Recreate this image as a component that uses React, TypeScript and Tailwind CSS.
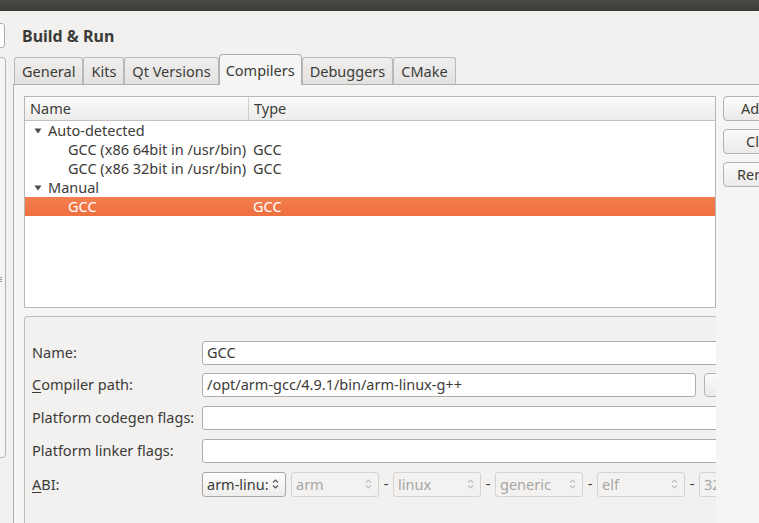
import React from 'react';

const font = { fontFamily: '"Noto Sans", "Open Sans", sans-serif' };

const Triangle: React.FC = () => (
  <svg width="8" height="6" viewBox="0 0 8 6" className="shrink-0">
    <path d="M0.5 0.5 L7.5 0.5 L4 5.5 Z" fill="#4a4a4a" />
  </svg>
);

const Spin: React.FC<{ color: string }> = ({ color }) => (
  <svg width="7" height="12" viewBox="0 0 7 12" className="shrink-0">
    <path d="M1 4.5 L3.5 2 L6 4.5" fill="none" stroke={color} strokeWidth="1.1" />
    <path d="M1 7.5 L3.5 10 L6 7.5" fill="none" stroke={color} strokeWidth="1.1" />
  </svg>
);

const tabs = ['General', 'Kits', 'Qt Versions', 'Compilers', 'Debuggers', 'CMake'];

const Combo: React.FC<{ label: string; disabled?: boolean; width: string }> = ({ label, disabled, width }) => (
  <div
    className={`flex h-[25px] shrink-0 items-center justify-between rounded-[3px] border pb-[1px] pl-[4px] pr-[6px] ${width} ${
      disabled ? 'border-[#d4d3d1] bg-[#f3f2f1] text-[#a7a6a4]' : 'border-[#a8a7a5] bg-gradient-to-b from-[#fdfdfd] to-[#eeedec] text-[#3c3b37]'
    }`}
  >
    <span>{label}</span>
    <Spin color={disabled ? '#c0bfbd' : '#55544f'} />
  </div>
);

const Dash: React.FC = () => <span className="w-[14px] shrink-0 pb-[2px] text-center text-[#3c3b37]">-</span>;

const Field: React.FC<{ children?: React.ReactNode }> = ({ children }) => (
  <div className="flex h-[24px] w-[560px] shrink-0 items-center rounded-[3px] border border-[#aeadab] bg-white px-[4px] pb-[1px] text-[#3c3b37]">
    {children}
  </div>
);

const App: React.FC = () => {
  return (
    <div style={font} className="relative h-[523px] w-[759px] overflow-hidden bg-[#f2f1f0] text-[14.5px] leading-[19px] text-[#3c3b37]">
      {/* Window title bar */}
      <div className="h-[11px] bg-gradient-to-b from-[#4d4b45] to-[#3c3b37]" />

      <div className="flex h-[512px]">
        {/* Cut-off sidebar */}
        <div className="relative w-[13px] shrink-0">
          <div className="absolute left-[-12px] top-[12px] h-[25px] w-[17px] rounded-[3px] border border-[#aeadab] bg-white" />
          <div className="absolute left-[-12px] top-[46px] h-[401px] w-[18px] rounded-[4px] border border-[#b5b4b2] bg-[#f5f5f5]" />
          <div className="absolute left-[-2px] top-[266px] flex flex-col gap-[1px]">
            <div className="h-[1px] w-[4px] bg-[#9a9996]" />
            <div className="h-[1px] w-[4px] bg-[#9a9996]" />
            <div className="h-[1px] w-[4px] bg-[#9a9996]" />
          </div>
        </div>

        {/* Main */}
        <div className="flex min-w-0 flex-1 flex-col">
          <div className="flex h-[43px] items-center pl-[9px] pt-[7px] text-[16px] font-bold text-[#3c3b37]">Build &amp; Run</div>

          {/* Tab bar */}
          <div className="flex h-[30px] items-end pl-[1px]">
            {tabs.map((t) =>
              t === 'Compilers' ? (
                <div
                  key={t}
                  className="relative z-10 mb-[-1px] flex h-[31px] items-center rounded-t-[4px] border border-b-0 border-[#b0afad] bg-[#f5f5f5] px-[6px] text-[#3c3b37]"
                >
                  {t}
                </div>
              ) : (
                <div
                  key={t}
                  className="flex h-[27px] items-center rounded-t-[3px] border border-b-0 border-[#bab9b7] bg-gradient-to-b from-[#f0efee] to-[#e3e2e0] px-[7px] text-[#3c3b37]"
                >
                  {t}
                </div>
              )
            )}
          </div>

          {/* Tab pane */}
          <div className="flex min-h-0 flex-1 flex-col border-l border-t border-[#b0afad] bg-[#f5f5f5] pl-[10px] pt-[11px]">
            <div className="flex gap-[7px]">
              {/* Tree */}
              <div className="h-[212px] w-[692px] shrink-0 overflow-hidden border border-[#b8b7b5] bg-white">
                <div className="flex h-[24px] border-b border-[#c3c2c0] bg-gradient-to-b from-[#fafafa] to-[#ededec]">
                  <div className="flex w-[224px] items-center border-r border-[#d0cfcd] pl-[5px]">Name</div>
                  <div className="flex items-center pl-[5px]">Type</div>
                </div>
                <div className="flex h-[19px] items-center gap-[6px] pl-[9px]">
                  <Triangle />
                  <span>Auto-detected</span>
                </div>
                <div className="flex h-[19px] items-center">
                  <span className="w-[228px] pl-[43px]">GCC (x86 64bit in /usr/bin)</span>
                  <span>GCC</span>
                </div>
                <div className="flex h-[19px] items-center">
                  <span className="w-[228px] pl-[43px]">GCC (x86 32bit in /usr/bin)</span>
                  <span>GCC</span>
                </div>
                <div className="flex h-[19px] items-center gap-[6px] pl-[9px]">
                  <Triangle />
                  <span>Manual</span>
                </div>
                <div className="flex h-[19px] items-center bg-gradient-to-b from-[#f47e4f] to-[#ee6f3e] text-white">
                  <span className="w-[228px] pl-[43px]">GCC</span>
                  <span>GCC</span>
                </div>
              </div>

              {/* Buttons */}
              <div className="flex flex-col gap-[8px]">
                <div className="flex h-[25px] w-[80px] items-center rounded-[4px] border border-[#b3b2b0] bg-gradient-to-b from-[#fbfbfa] to-[#ebeae8] pl-[17px]">
                  Add
                </div>
                <div className="flex h-[25px] w-[80px] items-center rounded-[4px] border border-[#b3b2b0] bg-gradient-to-b from-[#fbfbfa] to-[#ebeae8] pl-[22px]">
                  Clone
                </div>
                <div className="flex h-[25px] w-[80px] items-center rounded-[4px] border border-[#b3b2b0] bg-gradient-to-b from-[#fbfbfa] to-[#ebeae8] pl-[13px]">
                  Remove
                </div>
              </div>
            </div>

            {/* Details */}
            <div className="mt-[8px] flex min-h-0 w-[692px] flex-1 flex-col overflow-hidden rounded-tl-[4px] border-l border-t border-[#bebdbb] bg-[#f2f1f0] pl-[7px] pt-[24px]">
              <div className="flex h-[24px] items-center">
                <span className="w-[170px] shrink-0 pb-[1px]">Name:</span>
                <Field>GCC</Field>
              </div>
              <div className="mt-[8px] flex h-[24px] items-center">
                <span className="w-[170px] shrink-0 pb-[1px]">
                  <span className="underline underline-offset-2">C</span>ompiler path:
                </span>
                <div className="flex h-[24px] w-[494px] shrink-0 items-center rounded-[3px] border border-[#aeadab] bg-white px-[4px] pb-[1px]">
                  /opt/arm-gcc/4.9.1/bin/arm-linux-g++
                </div>
                <div className="ml-[8px] h-[24px] w-[40px] shrink-0 rounded-[4px] border border-[#b3b2b0] bg-gradient-to-b from-[#fbfbfa] to-[#ebeae8]" />
              </div>
              <div className="mt-[9px] flex h-[24px] items-center">
                <span className="w-[170px] shrink-0 pb-[1px]">Platform codegen flags:</span>
                <Field />
              </div>
              <div className="mt-[9px] flex h-[24px] items-center">
                <span className="w-[170px] shrink-0 pb-[1px]">Platform linker flags:</span>
                <Field />
              </div>
              <div className="mt-[9px] flex h-[25px] items-center">
                <span className="w-[170px] shrink-0 pb-[1px]">
                  <span className="underline underline-offset-2">A</span>BI:
                </span>
                <Combo label="arm-linu:" width="w-[84px]" />
                <div className="w-[5px] shrink-0" />
                <Combo label="arm" disabled width="w-[88px]" />
                <Dash />
                <Combo label="linux" disabled width="w-[88px]" />
                <Dash />
                <Combo label="generic" disabled width="w-[88px]" />
                <Dash />
                <Combo label="elf" disabled width="w-[88px]" />
                <Dash />
                <Combo label="32bit" disabled width="w-[88px]" />
              </div>
            </div>
          </div>
        </div>
      </div>
    </div>
  );
};

export default App;
